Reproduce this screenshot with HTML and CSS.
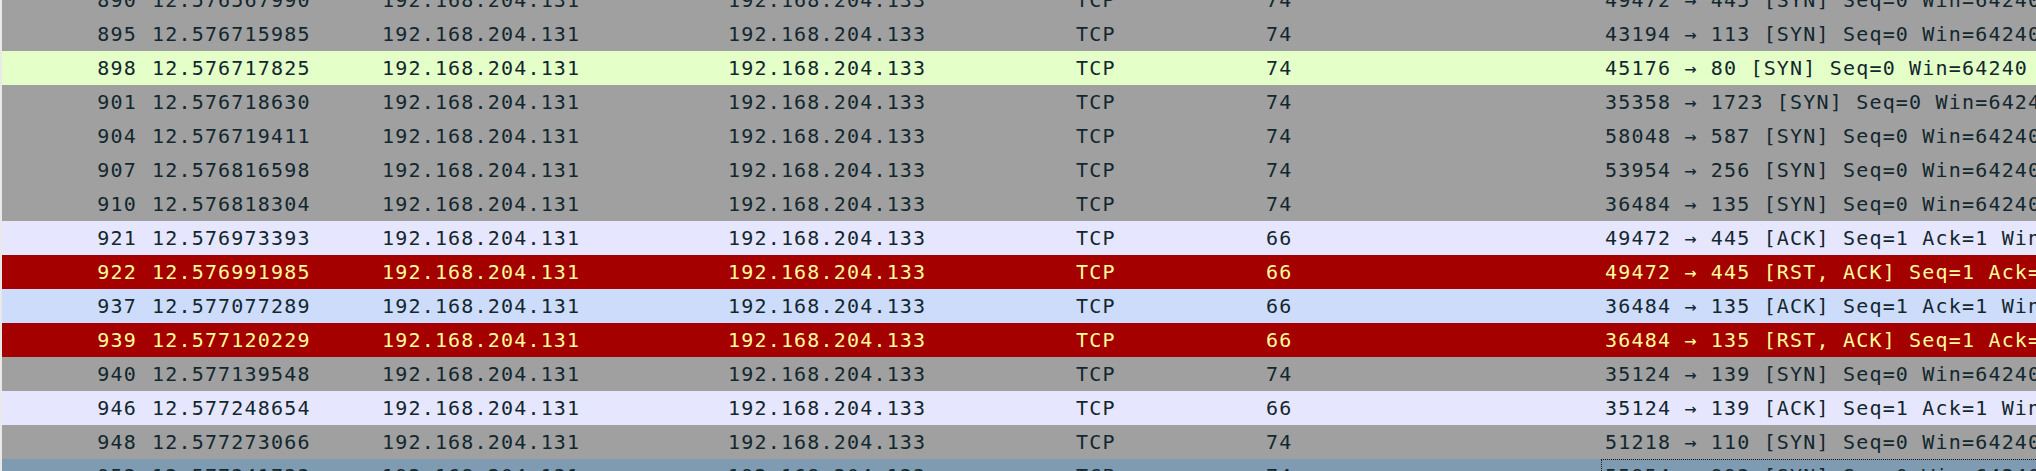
FILE: index.html
```html
<!DOCTYPE html>
<html lang="en">
<head>
<meta charset="utf-8">
<title>Packet list</title>
<link rel="stylesheet" href="styles.css">
</head>
<body>
<div class="packet-list">
  <div class="row syn">
    <div class="c no">890</div><div class="c time">12.576567990</div><div class="c src">192.168.204.131</div><div class="c dst">192.168.204.133</div><div class="c proto">TCP</div><div class="c len">74</div><div class="c info">49472 → 445 [SYN] Seq=0 Win=64240 Len=0 MSS=1460 SACK_PERM TSval=1</div>
  </div>
  <div class="row syn">
    <div class="c no">895</div><div class="c time">12.576715985</div><div class="c src">192.168.204.131</div><div class="c dst">192.168.204.133</div><div class="c proto">TCP</div><div class="c len">74</div><div class="c info">43194 → 113 [SYN] Seq=0 Win=64240 Len=0 MSS=1460 SACK_PERM TSval=1</div>
  </div>
  <div class="row http">
    <div class="c no">898</div><div class="c time">12.576717825</div><div class="c src">192.168.204.131</div><div class="c dst">192.168.204.133</div><div class="c proto">TCP</div><div class="c len">74</div><div class="c info">45176 → 80 [SYN] Seq=0 Win=64240 Len=0 MSS=1460 SACK_PERM TSval=1</div>
  </div>
  <div class="row syn">
    <div class="c no">901</div><div class="c time">12.576718630</div><div class="c src">192.168.204.131</div><div class="c dst">192.168.204.133</div><div class="c proto">TCP</div><div class="c len">74</div><div class="c info">35358 → 1723 [SYN] Seq=0 Win=64240 Len=0 MSS=1460 SACK_PERM TSval=1</div>
  </div>
  <div class="row syn">
    <div class="c no">904</div><div class="c time">12.576719411</div><div class="c src">192.168.204.131</div><div class="c dst">192.168.204.133</div><div class="c proto">TCP</div><div class="c len">74</div><div class="c info">58048 → 587 [SYN] Seq=0 Win=64240 Len=0 MSS=1460 SACK_PERM TSval=1</div>
  </div>
  <div class="row syn">
    <div class="c no">907</div><div class="c time">12.576816598</div><div class="c src">192.168.204.131</div><div class="c dst">192.168.204.133</div><div class="c proto">TCP</div><div class="c len">74</div><div class="c info">53954 → 256 [SYN] Seq=0 Win=64240 Len=0 MSS=1460 SACK_PERM TSval=1</div>
  </div>
  <div class="row syn">
    <div class="c no">910</div><div class="c time">12.576818304</div><div class="c src">192.168.204.131</div><div class="c dst">192.168.204.133</div><div class="c proto">TCP</div><div class="c len">74</div><div class="c info">36484 → 135 [SYN] Seq=0 Win=64240 Len=0 MSS=1460 SACK_PERM TSval=1</div>
  </div>
  <div class="row tcp">
    <div class="c no">921</div><div class="c time">12.576973393</div><div class="c src">192.168.204.131</div><div class="c dst">192.168.204.133</div><div class="c proto">TCP</div><div class="c len">66</div><div class="c info">49472 → 445 [ACK] Seq=1 Ack=1 Win=64256 Len=0 TSval=1</div>
  </div>
  <div class="row rst">
    <div class="c no">922</div><div class="c time">12.576991985</div><div class="c src">192.168.204.131</div><div class="c dst">192.168.204.133</div><div class="c proto">TCP</div><div class="c len">66</div><div class="c info">49472 → 445 [RST, ACK] Seq=1 Ack=1 Win=64256 Len=0 TSval=1</div>
  </div>
  <div class="row dce">
    <div class="c no">937</div><div class="c time">12.577077289</div><div class="c src">192.168.204.131</div><div class="c dst">192.168.204.133</div><div class="c proto">TCP</div><div class="c len">66</div><div class="c info">36484 → 135 [ACK] Seq=1 Ack=1 Win=64256 Len=0 TSval=1</div>
  </div>
  <div class="row rst">
    <div class="c no">939</div><div class="c time">12.577120229</div><div class="c src">192.168.204.131</div><div class="c dst">192.168.204.133</div><div class="c proto">TCP</div><div class="c len">66</div><div class="c info">36484 → 135 [RST, ACK] Seq=1 Ack=1 Win=64256 Len=0 TSval=1</div>
  </div>
  <div class="row syn">
    <div class="c no">940</div><div class="c time">12.577139548</div><div class="c src">192.168.204.131</div><div class="c dst">192.168.204.133</div><div class="c proto">TCP</div><div class="c len">74</div><div class="c info">35124 → 139 [SYN] Seq=0 Win=64240 Len=0 MSS=1460 SACK_PERM TSval=1</div>
  </div>
  <div class="row tcp">
    <div class="c no">946</div><div class="c time">12.577248654</div><div class="c src">192.168.204.131</div><div class="c dst">192.168.204.133</div><div class="c proto">TCP</div><div class="c len">66</div><div class="c info">35124 → 139 [ACK] Seq=1 Ack=1 Win=64256 Len=0 TSval=1</div>
  </div>
  <div class="row syn">
    <div class="c no">948</div><div class="c time">12.577273066</div><div class="c src">192.168.204.131</div><div class="c dst">192.168.204.133</div><div class="c proto">TCP</div><div class="c len">74</div><div class="c info">51218 → 110 [SYN] Seq=0 Win=64240 Len=0 MSS=1460 SACK_PERM TSval=1</div>
  </div>
  <div class="row selected">
    <div class="c no">953</div><div class="c time">12.577341733</div><div class="c src">192.168.204.131</div><div class="c dst">192.168.204.133</div><div class="c proto">TCP</div><div class="c len">74</div><div class="c info focus">55954 → 993 [SYN] Seq=0 Win=64240 Len=0 MSS=1460 SACK_PERM TSval=1</div>
  </div>
</div>
</body>
</html>
```

FILE: styles.css
```css
html, body {
  margin: 0;
  padding: 0;
  background: #ffffff;
  overflow: hidden;
}

.packet-list {
  margin-top: -17px;
  border-left: 2px solid #e9e9e9;
  font-family: "DejaVu Sans Mono", "Liberation Mono", monospace;
  font-size: 20px;
  letter-spacing: 1.18px;
  color: #12272e;
}

.row {
  display: grid;
  grid-template-columns: 136px 244px 346px 348px 190px 335px 1fr;
  height: 34px;
  line-height: 34px;
  white-space: nowrap;
}

.c {
  overflow: hidden;
}

.no {
  text-align: right;
  padding-right: 1px;
}

.time {
  padding-left: 14px;
}

.info {
  padding-left: 4px;
}

.syn { background: #a0a0a0; }
.http { background: #e4ffc7; }
.tcp { background: #e7e6ff; }
.dce { background: #cddcfb; }
.rst { background: #a40000; color: #fffc9c; }
.selected { background: #7f9bb2; }

.focus {
  box-sizing: border-box;
  border-top: 1px dotted #1a1a1a;
  border-left: 1px dotted #1a1a1a;
  padding-left: 3px;
  line-height: 33px;
}
```
